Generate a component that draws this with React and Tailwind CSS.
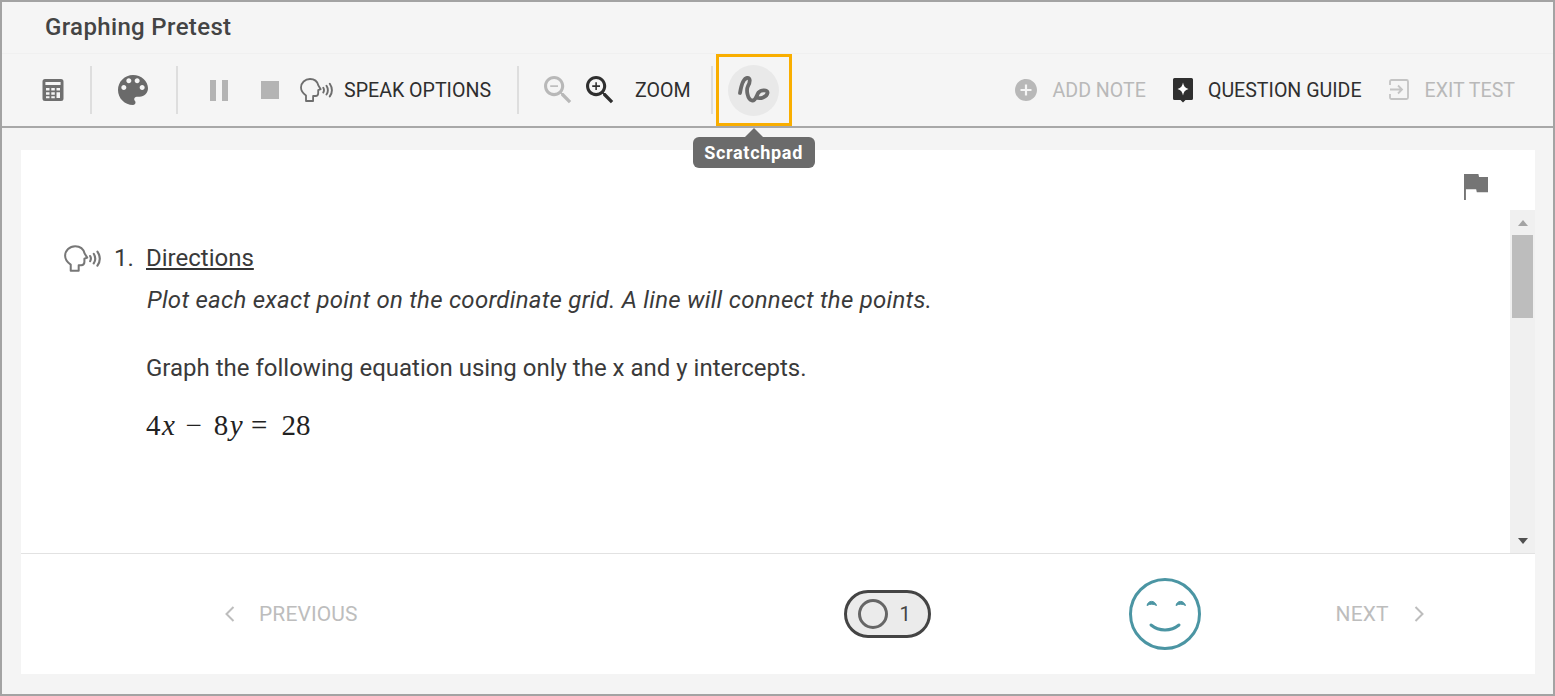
import React from 'react';

const ZOOM_LENS = 'M15.5 14h-.79l-.28-.27C15.41 12.59 16 11.11 16 9.5 16 5.91 13.09 3 9.5 3S3 5.91 3 9.5 5.91 16 9.5 16c1.61 0 3.09-.59 4.23-1.57l.27.28v.79l5 4.99L20.49 19l-4.99-5zm-6 0C7.01 14 5 11.99 5 9.5S7.01 5 9.5 5 14 7.01 14 9.5 11.99 14 9.5 14z';

function SpeakIcon({ className }) {
  return (
    <svg viewBox="0 0 33 24" className={className} fill="none" stroke="currentColor">
      <path d="M6 23v-5.500C3 15.500 1 12.800 1 9.600 1 4.800 5 1 10 1c4.400 0 7.500 2.800 8.400 6.500l2.300 3.700-2.500 1v3c0 1.700-1.100 2.800-2.800 2.800h-2.300V23z" strokeWidth="1.800" strokeLinejoin="round" />
      <path d="M23.300 9.800c.9 1.500.9 3.100 0 4.600M26.500 7.800c1.700 2.700 1.700 6 0 8.600M29.800 5.800c2.600 3.900 2.600 8.800 0 12.600" strokeWidth="1.900" strokeLinecap="round" />
    </svg>
  );
}

function Divider({ className }) {
  return <div className={`w-0.5 h-12 bg-[#dedede] ${className}`} />;
}

export default function App() {
  return (
    <div className="w-[1555px] h-[696px] overflow-hidden border-2 border-[#a3a3a3] bg-[#f4f4f4] flex flex-col font-['Roboto',sans-serif] text-[#2e2e2e]">
      {/* Title */}
      <div className="h-[52px] shrink-0 flex items-center pl-[43px] pb-0.5 border-b border-[#f0f0f0] bg-[#f5f5f5]">
        <h1 className="text-[24px] font-medium text-[#444444] tracking-[0.35px]">Graphing Pretest</h1>
      </div>

      {/* Toolbar */}
      <div className="h-[74px] shrink-0 flex items-center border-b-2 border-[#a8a8a8] bg-[#f5f5f5] text-[19.6px]">
        <svg viewBox="0 0 22 24" className="w-[22px] h-6 ml-10 text-[#6f6f6f]">
          <path fill="currentColor" fillRule="evenodd" d="M3 1h16a2.500 2.500 0 0 1 2.500 2.500v17A2.500 2.500 0 0 1 19 23H3a2.500 2.500 0 0 1-2.500-2.500v-17A2.500 2.500 0 0 1 3 1zm.4 3v3h15.200V4zM4 10v2.500h3.500V10zm5.300 0v2.500h3.500V10zm5.200 0v2.500H18V10zM4 14.200v2.500h3.500v-2.500zm5.300 0v2.500h3.500v-2.500zm5.200 0V20H18v-5.800zM4 18.200v2h3.500v-2zm5.300 0v2h3.500v-2z" />
        </svg>
        <Divider className="ml-[26px]" />
        <svg viewBox="3 3 18 18" className="w-[30px] h-[30px] ml-[26px] text-[#6a6a6a]">
          <path fill="currentColor" d="M12 3c-4.970 0-9 4.030-9 9s4.030 9 9 9c.830 0 1.500-.670 1.500-1.500 0-.390-.150-.740-.390-1.010-.230-.260-.380-.610-.380-.990 0-.830.670-1.500 1.500-1.500H16c2.760 0 5-2.240 5-5 0-4.420-4.030-8-9-8zm-5.500 9c-.830 0-1.500-.670-1.500-1.500S5.670 9 6.500 9 8 9.670 8 10.500 7.330 12 6.500 12zm3-4C8.670 8 8 7.330 8 6.500S8.670 5 9.500 5s1.500.670 1.500 1.500S10.330 8 9.500 8zm5 0c-.830 0-1.500-.670-1.500-1.500S13.670 5 14.500 5s1.500.670 1.500 1.500S15.330 8 14.500 8zm3 4c-.830 0-1.500-.670-1.500-1.500S16.670 9 17.500 9s1.500.670 1.500 1.500-.670 1.500-1.500 1.500z" />
        </svg>
        <Divider className="ml-[28px]" />
        <div className="flex gap-1.5 ml-[32px] h-[21px]">
          <div className="w-1.5 bg-[#b4b4b4]" />
          <div className="w-1.5 bg-[#b4b4b4]" />
        </div>
        <div className="w-[18px] h-[18px] ml-[33px] bg-[#b4b4b4]" />
        <SpeakIcon className="w-[33px] h-6 ml-[21px] text-[#6e6e6e]" />
        <span className="ml-[11px] pt-0.5 whitespace-nowrap">SPEAK OPTIONS</span>
        <Divider className="ml-[26px]" />
        <svg viewBox="3 3 18 18" className="w-[28px] h-[28px] ml-[25px] text-[#b8b8b8]">
          <path fill="currentColor" d={ZOOM_LENS} />
          <path fill="currentColor" d="M7 9h5v1H7z" />
        </svg>
        <svg viewBox="3 3 18 18" className="w-[28px] h-[28px] ml-[14px] text-[#2f2f2f]">
          <path fill="currentColor" d={ZOOM_LENS} />
          <path fill="currentColor" d="M12 10h-2v2H9v-2H7V9h2V7h1v2h2v1z" />
        </svg>
        <span className="ml-[21px] pt-0.5">ZOOM</span>
        <Divider className="ml-[20px]" />

        {/* Scratchpad, focused */}
        <div className="relative self-stretch w-[76px] ml-[3px] border-[3px] border-[#f9ae00] flex items-center justify-center">
          <div className="w-[51px] h-[51px] rounded-full bg-[#e9e9e9] flex items-center justify-center">
            <svg viewBox="11 11 35 35" className="w-[35px] h-[35px] text-[#6a6a6a]" fill="none" stroke="currentColor" strokeWidth="3.800" strokeLinecap="round" strokeLinejoin="round">
              <path d="M15 31C16 25 18 16.500 22 16 26 15.500 25 20.500 23 24 21 28 22.500 37.500 27 38.500 31 39 31.500 33 33.500 30.500 36 27.500 43 27.500 42.500 31 42 34.500 35 38 31.500 35" />
            </svg>
          </div>
          <div className="absolute z-10 top-[80px] left-[-26px] w-[122px] h-[31px] rounded-md bg-[#6b6b6b] text-white text-[18px] font-bold tracking-[0.7px] flex items-center justify-center">
            <div className="absolute top-[-9px] left-[51px] w-0 h-0 border-x-[10px] border-x-transparent border-b-[10px] border-b-[#6b6b6b]" />
            Scratchpad
          </div>
        </div>

        <div className="ml-auto flex items-center pr-[38px]">
          <svg viewBox="2 2 20 20" className="w-[22px] h-[22px] text-[#b8b8b8]">
            <path fill="currentColor" d="M12 2C6.480 2 2 6.480 2 12s4.480 10 10 10 10-4.480 10-10S17.520 2 12 2zm5 11h-4v4h-2v-4H7v-2h4V7h2v4h4v2z" />
          </svg>
          <span className="ml-4 pt-0.5 text-[#b9b9b9]">ADD NOTE</span>
          <svg viewBox="0 0 22 26" className="w-[22px] h-[26px] ml-[26px] text-[#2f2f2f]">
            <path fill="currentColor" d="M2.500 1h17A1.500 1.500 0 0 1 21 2.500v19a1.500 1.500 0 0 1-1.500 1.500H13.500L11 25.500 8.500 23h-6A1.500 1.500 0 0 1 1 21.500v-19A1.500 1.500 0 0 1 2.500 1z" />
            <path fill="#ffffff" d="M11 5.500c.6 3.500 2 5.400 5.500 6.500-3.500 1.100-4.900 3-5.500 6.500-.6-3.500-2-5.400-5.500-6.500 3.500-1.100 4.900-3 5.500-6.500z" />
          </svg>
          <span className="ml-3.5 pt-0.5 text-[#2f2f2f]">QUESTION GUIDE</span>
          <svg viewBox="0 0 20 21" className="w-5 h-[21px] ml-[27px] text-[#c4c4c4]" fill="none" stroke="currentColor" strokeWidth="1.800">
            <path d="M1 6V2.500A1.500 1.500 0 0 1 2.500 1h15A1.500 1.500 0 0 1 19 2.500v16a1.500 1.500 0 0 1-1.500 1.500h-15A1.500 1.500 0 0 1 1 18.500V15" />
            <path d="M1 10.500h11.500M9 6.500l4 4-4 4" />
          </svg>
          <span className="ml-4 pt-0.5 text-[#b9b9b9]">EXIT TEST</span>
        </div>
      </div>

      {/* Test panel */}
      <div className="flex-1 min-h-0 pt-[22px] pb-5 pl-[19px] pr-[18px]">
        <div className="h-full bg-white flex flex-col">
          <div className="h-[60px] shrink-0 flex justify-end pr-[47px] pt-6">
            <svg viewBox="5 4 15 17" className="w-6 h-[26px] text-[#757575]" preserveAspectRatio="none">
              <path fill="currentColor" d="M14.400 6L14 4H5v17h1.200v-7h6.400l.4 2h7V6z" />
            </svg>
          </div>

          <div className="h-[344px] shrink-0 flex border-b border-[#e2e2e2]">
            <div className="flex-1 flex items-start pl-[43px] pt-[33px] text-[24px] text-[#3a3a3a] leading-[30px]">
              <SpeakIcon className="w-[37px] h-[27px] mt-[2px] text-[#777777]" />
              <span className="ml-[13px] w-8">1.</span>
              <div>
                <div className="underline underline-offset-[2px] decoration-2 decoration-[#333333]">Directions</div>
                <div className="italic mt-3 ml-px tracking-[0.26px]">Plot each exact point on the coordinate grid. A line will connect the points.</div>
                <div className="mt-[38px]">Graph the following equation using only the x and y intercepts.</div>
                <div className="mt-[27px] flex font-['Liberation_Serif',serif] text-[29px] text-[#222222] leading-[30px] whitespace-nowrap">
                  <span className="tracking-[1.5px]">4<i>x</i></span>
                  <span className="ml-[9px]">−</span>
                  <span className="ml-[12px] tracking-[1.5px]">8<i>y</i></span>
                  <span className="ml-[7px]">=</span>
                  <span className="ml-[14px]">28</span>
                </div>
              </div>
            </div>

            {/* Scrollbar */}
            <div className="w-[25px] shrink-0 bg-[#f0f0f0] flex flex-col items-center px-0.5">
              <div className="h-[25px] w-full flex items-center justify-center">
                <div className="w-0 h-0 border-x-[5.500px] border-x-transparent border-b-[6px] border-b-[#a3a3a3]" />
              </div>
              <div className="w-full h-[83px] bg-[#bdbdbd]" />
              <div className="mt-auto h-[25px] w-full flex items-center justify-center">
                <div className="w-0 h-0 border-x-[5.500px] border-x-transparent border-t-[6px] border-t-[#505050]" />
              </div>
            </div>
          </div>

          {/* Footer nav */}
          <div className="flex-1 flex items-center text-[21px] tracking-[0.1px] text-[#bdbdbd]">
            <svg viewBox="0 0 10 16" className="w-2.5 h-4 ml-[204px]" fill="none" stroke="currentColor" strokeWidth="2">
              <path d="M8.500 1 1.500 8l7 7" />
            </svg>
            <span className="ml-6 pt-0.5">PREVIOUS</span>
            <div className="ml-[486px] w-[87px] h-12 rounded-full border-[3px] border-[#444444] bg-[#ebebeb] flex items-center pl-[11px] text-[#444444] text-xl">
              <div className="w-[30px] h-[30px] rounded-full border-[3px] border-[#666666]" />
              <span className="ml-[12px]">1</span>
            </div>
            <svg viewBox="0 0 72 72" className="w-[72px] h-[72px] ml-[198px]" fill="none" stroke="#4b95a3" strokeWidth="3">
              <circle cx="36" cy="36" r="34.500" />
              <path d="M18 27.500c1-5.500 8-5.500 9.500 0-3-1.800-6.500-1.800-9.500 0zM47 27.500c1-5.500 8-5.500 9.500 0-3-1.800-6.500-1.800-9.500 0z" fill="#4b95a3" strokeWidth="1" />
              <path d="M22 47c8 6.500 20 6.500 28 0" strokeLinecap="round" />
            </svg>
            <span className="ml-[135px] pt-0.5">NEXT</span>
            <svg viewBox="0 0 10 16" className="w-2.5 h-4 ml-[25px]" fill="none" stroke="currentColor" strokeWidth="2">
              <path d="M1.500 1 8.500 8l-7 7" />
            </svg>
          </div>
        </div>
      </div>
    </div>
  );
}
